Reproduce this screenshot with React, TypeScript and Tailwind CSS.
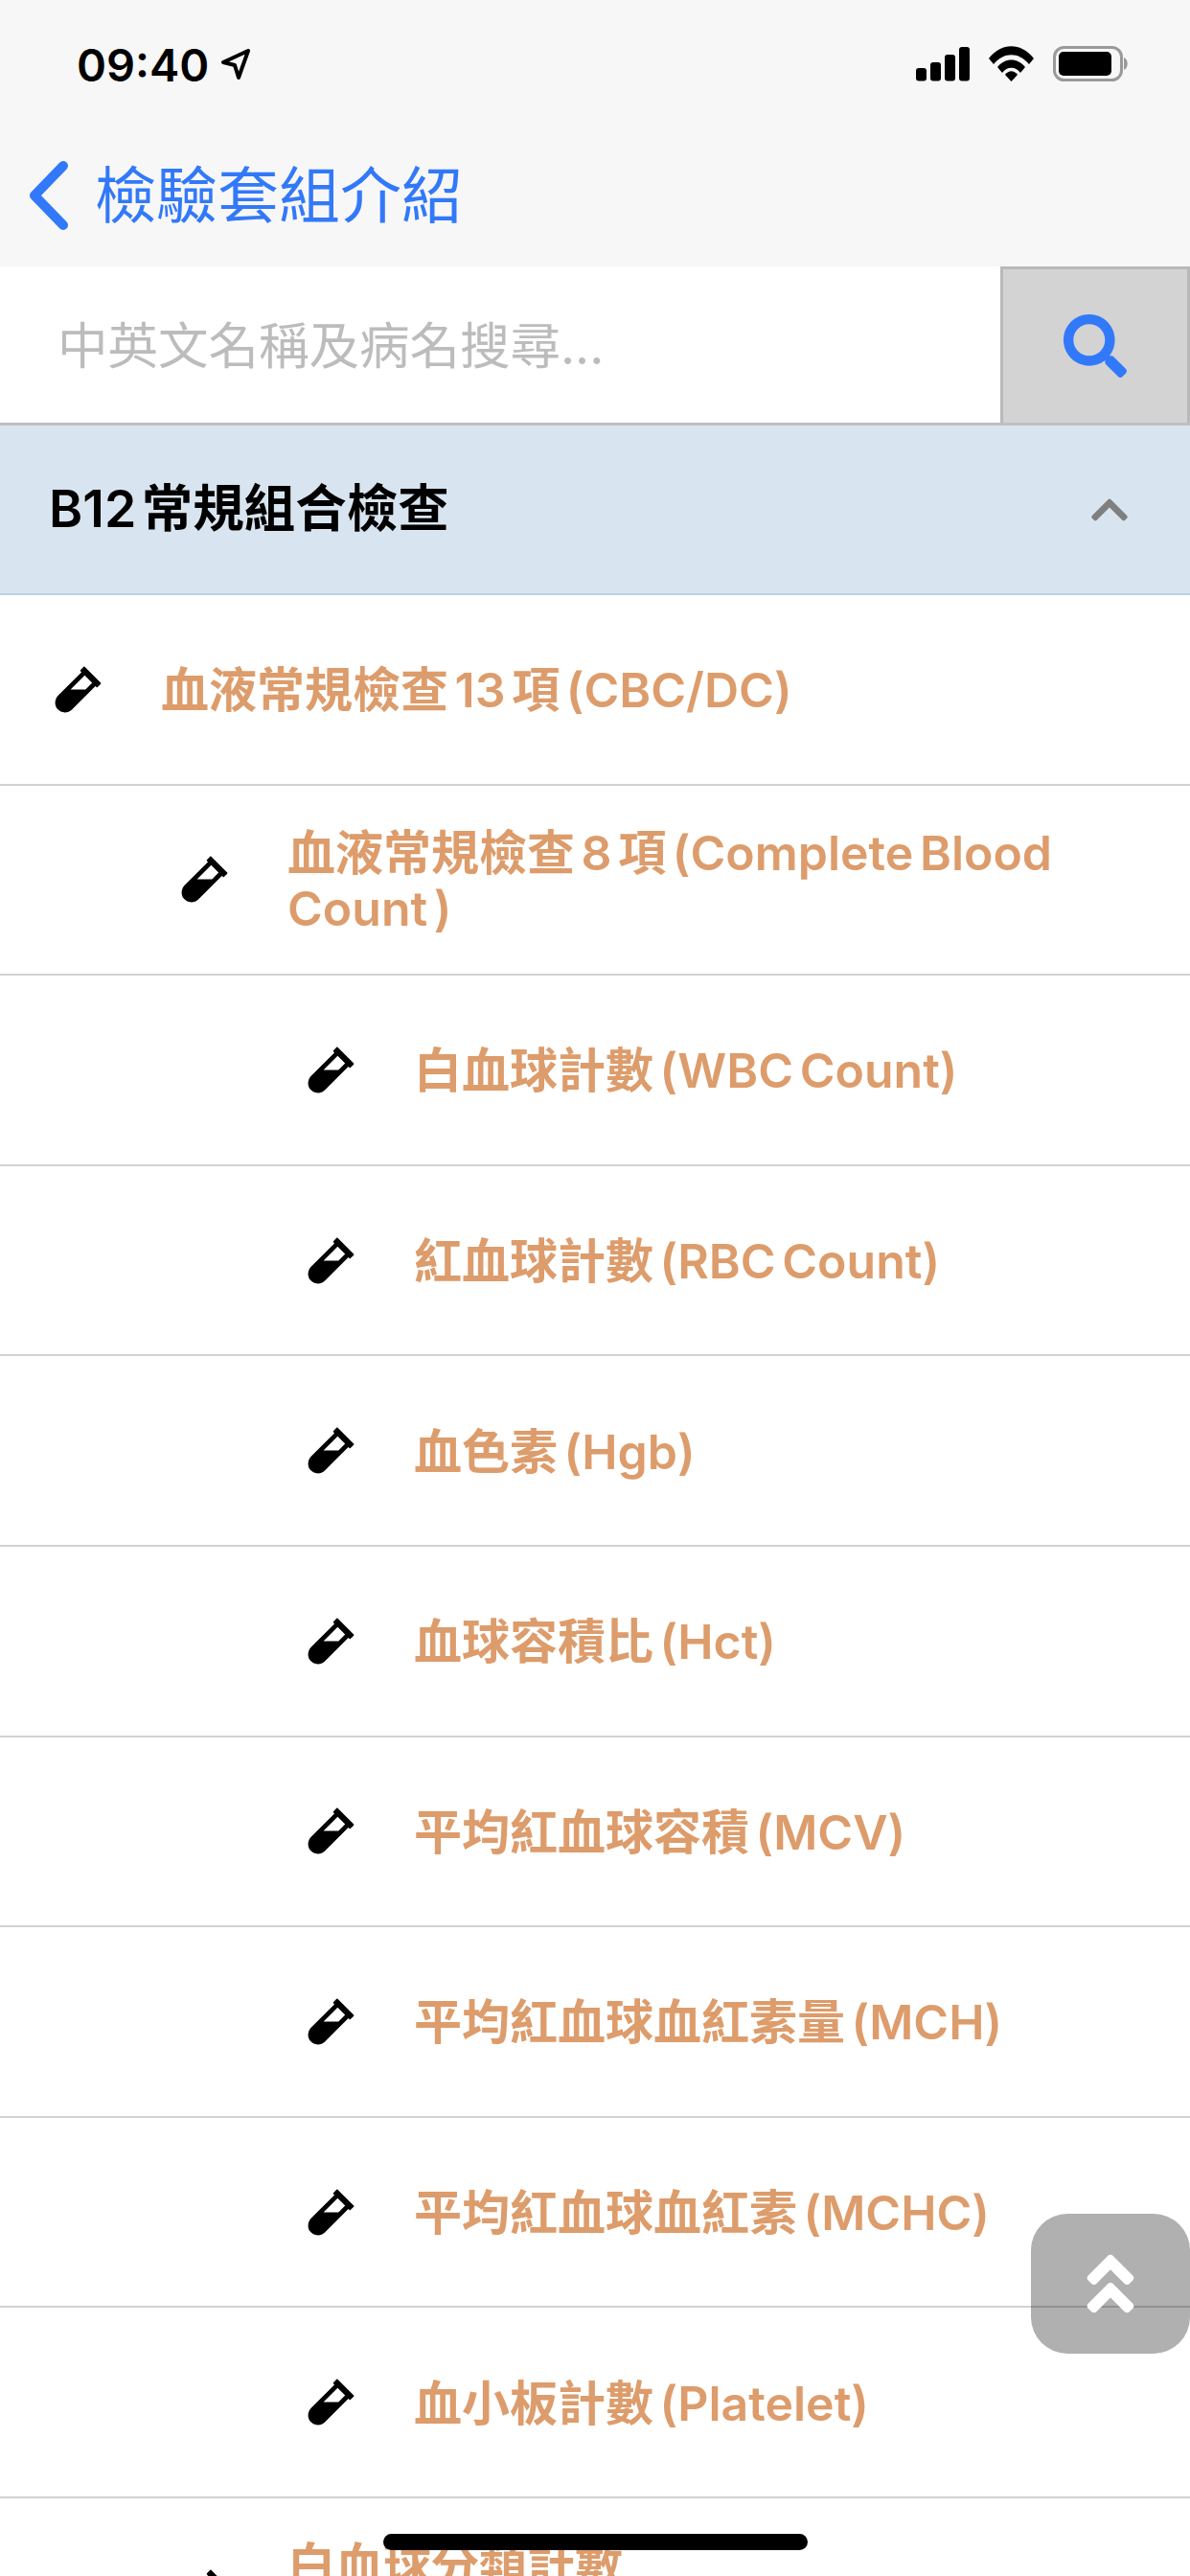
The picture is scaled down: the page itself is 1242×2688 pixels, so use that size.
import { FaVial, FaSearch, FaChevronUp, FaAngleDoubleUp } from "react-icons/fa";

const FONT = "font-['Inter','Noto_Sans_CJK_TC','Noto_Sans',sans-serif]";

const rows: { level: 0 | 1 | 2; text: string }[] = [
  { level: 0, text: "血液常規檢查 13 項 (CBC/DC)" },
  { level: 1, text: "血液常規檢查 8 項 (Complete Blood Count )" },
  { level: 2, text: "白血球計數 (WBC Count)" },
  { level: 2, text: "紅血球計數 (RBC Count)" },
  { level: 2, text: "血色素 (Hgb)" },
  { level: 2, text: "血球容積比 (Hct)" },
  { level: 2, text: "平均紅血球容積 (MCV)" },
  { level: 2, text: "平均紅血球血紅素量 (MCH)" },
  { level: 2, text: "平均紅血球血紅素 (MCHC)" },
  { level: 2, text: "血小板計數 (Platelet)" },
  { level: 1, text: "白血球分類計數\n(Differential Count)" },
];

const indent = ["pl-[56px]", "pl-[188px]", "pl-[320px]"];

function StatusIcons() {
  return (
    <svg width="222" height="38" viewBox="0 0 222 38" className="block">
      <rect x="0" y="23" width="11" height="13.5" rx="3" fill="#000" />
      <rect x="15" y="17" width="11" height="19.5" rx="3" fill="#000" />
      <rect x="30" y="9" width="11" height="27.5" rx="3" fill="#000" />
      <rect x="45" y="1" width="11" height="35.5" rx="3" fill="#000" />
      <path d="M76 13 C89 -4 110 -4 123 13 L118 19 C107 6 92 6 81 19 Z" fill="#000" />
      <path d="M85 22 C93 12 106 12 114 22 L109 28 C104 21 95 21 90 28 Z" fill="#000" />
      <path d="M93 30 C97 25 102 25 106 30 L99.5 37 Z" fill="#000" />
      <rect x="144.5" y="1.5" width="70" height="34" rx="10" fill="none" stroke="#9a9a9a" strokeWidth="3" />
      <rect x="149" y="6" width="55" height="25" rx="5" fill="#000" />
      <path d="M217 12 C222 14 222 23 217 25 Z" fill="#9a9a9a" />
    </svg>
  );
}

export default function App() {
  return (
    <div className={`${FONT} relative w-[1242px] h-[2688px] overflow-hidden bg-white`}>
      <div className="bg-[#f7f7f7] h-[278px] flex flex-col">
        <div className="h-[134px] flex items-center justify-between pl-[80px] pr-[64px]">
          <div className="flex items-center gap-[12px]">
            <span className="font-semibold text-[47px] leading-none text-black">09:40</span>
            <svg width="32" height="34" viewBox="0 0 32 34">
              <path d="M29 3 L3 15 L15 18 L19 31 Z" fill="none" stroke="#000" strokeWidth="4" strokeLinejoin="round" />
            </svg>
          </div>
          <StatusIcons />
        </div>
        <div className="flex items-center pl-[26px] h-[140px]">
          <svg width="48" height="74" viewBox="0 0 48 74" className="shrink-0">
            <path d="M40 6 L10 37 L40 68" fill="none" stroke="#3279f9" strokeWidth="10" strokeLinecap="round" strokeLinejoin="round" />
          </svg>
          <span className="ml-[25px] text-[64px] leading-none text-[#3279f9]">檢驗套組介紹</span>
        </div>
      </div>

      <div className="flex h-[166px] border-b-[3px] border-[#bfbfbf]">
        <div className="flex-1 flex items-center pl-[60px] pt-[3px] text-[52.5px] text-[#bcbcbc]">中英文名稱及病名搜尋...</div>
        <div className="w-[198px] bg-[#d3d3d3] border-[3px] border-b-0 border-[#b9b9b9] flex items-center justify-center">
          <FaSearch size={66} color="#3279f9" />
        </div>
      </div>

      <div className="h-[177px] bg-[#d8e5f0] border-b-2 border-[#b9d0e4] flex items-center justify-between pl-[51px] pr-[62px]">
        <span className="text-[53.5px] font-semibold text-black [word-spacing:-8px]">B12 常規組合檢查</span>
        <FaChevronUp size={44} color="#7f7f7f" />
      </div>

      {rows.map((r, i) => (
        <div
          key={i}
          className={`h-[198.6px] shrink-0 border-b-2 border-[#d2d2d2] flex items-center gap-[61px] pr-[60px] ${indent[r.level]}`}
        >
          <FaVial size={51} color="#000" className="shrink-0" />
          <span className="pt-[2px] text-[50px] leading-[58px] font-semibold text-[#dd9c6b] whitespace-pre-line [word-spacing:-6px]">{r.text}</span>
        </div>
      ))}

      <button className="absolute left-[1076px] top-[2310px] w-[166px] h-[146px] rounded-[38px] bg-[rgba(0,0,0,0.31)] flex items-center justify-center">
        <FaAngleDoubleUp size={78} color="#fff" />
      </button>

      <div className="absolute left-[400px] top-[2644px] w-[443px] h-[17px] rounded-full bg-black" />
    </div>
  );
}
